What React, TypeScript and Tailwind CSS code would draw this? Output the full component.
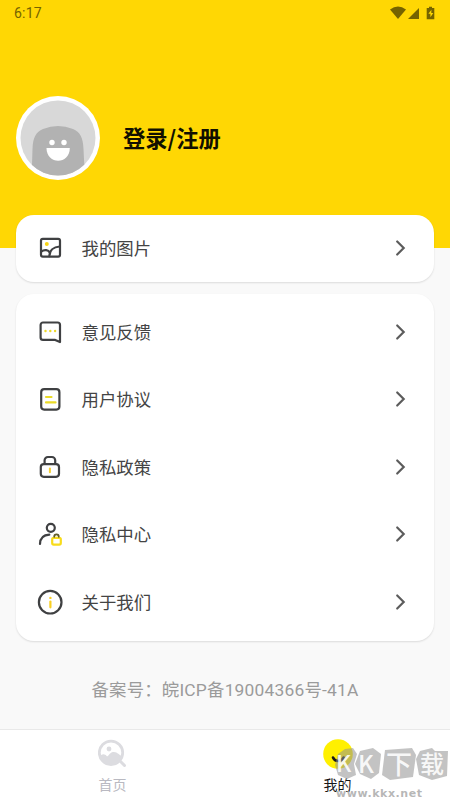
import type { ReactNode } from 'react';

interface MenuItem {
  label: string;
  icon: ReactNode;
}

const iconProps = {
  width: 26,
  height: 26,
  viewBox: '0 0 26 26',
  fill: 'none',
  stroke: '#3f4042',
  strokeWidth: 2.2,
  strokeLinecap: 'round' as const,
  strokeLinejoin: 'round' as const,
};

const PictureIcon = () => (
  <svg {...iconProps}>
    <rect x="4" y="3.800" width="19" height="17.800" rx="1.800" />
    <path d="M4.200 16.700c3.300-2.500 7.200-1.800 8.600 1M12.400 21.200c.2-5.900 4.200-9.400 10.200-9.700" />
    <circle cx="9.800" cy="8.900" r="2" fill="#f8d517" stroke="none" />
  </svg>
);

const FeedbackIcon = () => (
  <svg {...iconProps}>
    <path d="M6 3.500h14.600a2.400 2.400 0 0 1 2.400 2.400v17.200l-4.800-2.200H6a2.400 2.400 0 0 1-2.400-2.400V5.900A2.400 2.400 0 0 1 6 3.500Z" />
    <path d="M8.500 12h.01M13.300 12h.01M18.100 12h.01" stroke="#eed92b" strokeWidth="2.400" />
  </svg>
);

const AgreementIcon = () => (
  <svg {...iconProps}>
    <rect x="4.200" y="3.200" width="18.200" height="20.400" rx="3" />
    <path d="M9 11h5.500M9 16.400h9.500" stroke="#ebdb27" />
  </svg>
);

const LockIcon = () => (
  <svg {...iconProps}>
    <rect x="3.800" y="10.100" width="18.200" height="12.700" rx="3" />
    <path d="M7.600 9.800V6.300a3.300 3.300 0 0 1 3.300-3.300h4a3.300 3.300 0 0 1 3.300 3.300v3.500" />
    <path d="M12.900 14.500v3.800" stroke="#f5cf33" strokeWidth="2" />
  </svg>
);

const PrivacyIcon = () => (
  <svg {...iconProps}>
    <circle cx="13.800" cy="6.800" r="4" />
    <path d="M3 23c.2-5.500 3.700-9 9.300-9.300" />
    <rect x="15.200" y="16.800" width="8.600" height="6.800" rx="1.500" stroke="#f8dc1b" />
    <path d="M17.200 15.800c0-3.300 4.600-3.300 4.600 0" stroke="#615b2b" strokeWidth="1.700" />
  </svg>
);

const AboutIcon = () => (
  <svg {...iconProps}>
    <circle cx="13.200" cy="13.200" r="11.300" />
    <path d="M13.400 12.500v5.800" stroke="#f9cf22" />
    <path d="M13.400 8.900h.01" stroke="#f9cf22" strokeWidth="2.400" />
  </svg>
);

const settings: MenuItem[] = [
  { label: '意见反馈', icon: <FeedbackIcon /> },
  { label: '用户协议', icon: <AgreementIcon /> },
  { label: '隐私政策', icon: <LockIcon /> },
  { label: '隐私中心', icon: <PrivacyIcon /> },
  { label: '关于我们', icon: <AboutIcon /> },
];

function StatusBar() {
  return (
    <div className="flex h-[26px] items-center justify-between pl-[14px] pr-[14px] text-[#756300]">
      <span className="font-[Roboto] text-[14px] leading-none tracking-[0.2px]">6:17</span>
      <svg width="46" height="14" viewBox="0 0 46 14" fill="currentColor">
        <path d="M0 3.600q8-6 16 0l-8 9.400Z" />
        <path d="M18 13L29 2v11Z" />
        <path d="M39 0.800h3v1.200h2.300V13.300h-7.600V2H39Z" />
        <path d="M41.400 3.700l-3 4h2v3.600l2.900-4.400h-2Z" fill="#ffd900" />
      </svg>
    </div>
  );
}

function Avatar() {
  return (
    <svg className="shrink-0" width="84" height="84" viewBox="0 0 84 84">
      <defs>
        <clipPath id="avatar-face">
          <circle cx="42" cy="42" r="37.500" />
        </clipPath>
      </defs>
      <circle cx="42" cy="42" r="42" fill="#fff" />
      <circle cx="42" cy="42" r="37.500" fill="#d8d8d8" />
      <path
        d="M15.500 84L16.500 53C17 41 20 36 27 33Q42 27 57 33C64 36 67 41 67.500 53L69 84Z"
        fill="#b2b2b2"
        clipPath="url(#avatar-face)"
      />
      <circle cx="36" cy="46.500" r="2.700" fill="#fff" />
      <circle cx="48" cy="46.500" r="2.700" fill="#fff" />
      <path d="M30.500 52h23.300c0 17-23.300 17-23.300 0Z" fill="#fff" />
    </svg>
  );
}

function MenuRow({ label, icon }: MenuItem) {
  return (
    <button type="button" className="flex h-[67.500px] w-full items-center pl-[21px] pr-[27px]">
      {icon}
      <span className="ml-[18.500px] flex-1 pb-px text-left text-[17.400px] leading-none text-[#444]">{label}</span>
      <svg width="12" height="18" viewBox="0 0 12 18" fill="none" stroke="#5c5c5c" strokeWidth="2.200" strokeLinecap="round">
        <path d="M2.200 2.500L8.700 9L2.200 15.500" />
      </svg>
    </button>
  );
}

function Watermark() {
  return (
    <div className="pointer-events-none absolute left-[334px] top-[746px] h-[54px] w-[116px]">
      <svg className="overflow-visible" width="116" height="54" viewBox="0 0 116 54">
        <g fill="#929292" fillOpacity="0.550">
          <path d="M4 8L11 3L19 2L23 8L20 18L22 29L13 33L4 29L1 19Z" />
          <path d="M26 5L39 2L47 8L45 27L37 33L26 28L21 18Z" />
          <path d="M51 4L78 2L82 9L79 31L56 34L48 29Z" />
          <path d="M86 5L98 2L101 5L114 5L113 30L98 34L85 29L82 13Z" />
        </g>
        <g fill="#fff" fillOpacity="0.900" fontFamily="Noto Sans CJK SC, sans-serif" fontWeight="500">
          <text x="2" y="26" fontSize="23">K</text>
          <text x="24" y="27" fontSize="24">K</text>
          <text x="52" y="28" fontSize="26">下</text>
          <text x="86" y="27" fontSize="24">载</text>
        </g>
        <text
          x="2"
          y="51"
          fontSize="11"
          fontWeight="700"
          fill="#aaa"
          fillOpacity="0.850"
          fontFamily="DejaVu Sans, sans-serif"
          textLength="86"
        >
          www.kkx.net
        </text>
      </svg>
    </div>
  );
}

function TabBar() {
  return (
    <nav className="grid h-[71px] grid-cols-2 border-t border-[#e9e9e9] bg-white text-[14px] leading-none">
      <button type="button" className="flex flex-col items-center pt-[9px] text-[#b9b9c1]">
        <svg width="30" height="30" viewBox="0 0 30 30" fill="none">
          <circle cx="13" cy="13.800" r="11.700" stroke="#dcdce0" strokeWidth="2.800" />
          <path d="M22.500 22.500l4 4" stroke="#dcdce0" strokeWidth="3" strokeLinecap="round" />
          <circle cx="11" cy="10" r="2.400" fill="#dcdce0" />
          <path d="M1.500 18c1.800-3.500 5.500-3.300 7.300-.7 1.600.6 2.700-3.800 6.200-4.300 4.400-.6 6.200 3.500 9.200 4C22 27.500 7 29.500 1.500 18Z" fill="#dcdce0" />
        </svg>
        <span className="mt-[8px]">首页</span>
      </button>
      <button type="button" className="flex flex-col items-center pt-[9px] text-[#171717]">
        <svg width="30" height="30" viewBox="0 0 30 30" fill="none">
          <circle cx="15" cy="15" r="14.800" fill="#fff000" />
          <path d="M10 18.500c1.800 4.600 8.600 4.600 10.600 0" stroke="#171717" strokeWidth="2.600" strokeLinecap="round" />
        </svg>
        <span className="mt-[8px]">我的</span>
      </button>
    </nav>
  );
}

export default function App() {
  return (
    <div className="relative flex h-screen w-full flex-col overflow-hidden bg-[#f9f9f9] font-['Noto_Sans_CJK_SC',sans-serif]">
      {/* Profile header */}
      <header className="h-[248px] shrink-0 bg-[#ffd704]">
        <StatusBar />
        <div className="mt-[70px] flex items-center gap-[23px] pl-[16px]">
          <Avatar />
          <h1 className="pb-[2px] text-[22.300px] font-bold leading-none text-[#111000]">登录/注册</h1>
        </div>
      </header>

      {/* Menu cards */}
      <main className="-mt-[33.500px] flex-1 px-[16px]">
        <section className="h-[67px] rounded-[18px] bg-white shadow-[0_1px_2px_#0000001f]">
          <MenuRow label="我的图片" icon={<PictureIcon />} />
        </section>
        <section className="mt-[12.500px] h-[347px] rounded-[18px] bg-white pt-[4px] shadow-[0_1px_2px_#0000001f]">
          {settings.map((item) => (
            <MenuRow key={item.label} {...item} />
          ))}
        </section>
        <p className="mt-[40.500px] text-center font-[Roboto,'Noto_Sans_CJK_SC',sans-serif] text-[17.400px] leading-none tracking-[0.2px] text-[#9b9b9b]">
          备案号：皖ICP备19004366号-41A
        </p>
      </main>

      <TabBar />
      <Watermark />
    </div>
  );
}
